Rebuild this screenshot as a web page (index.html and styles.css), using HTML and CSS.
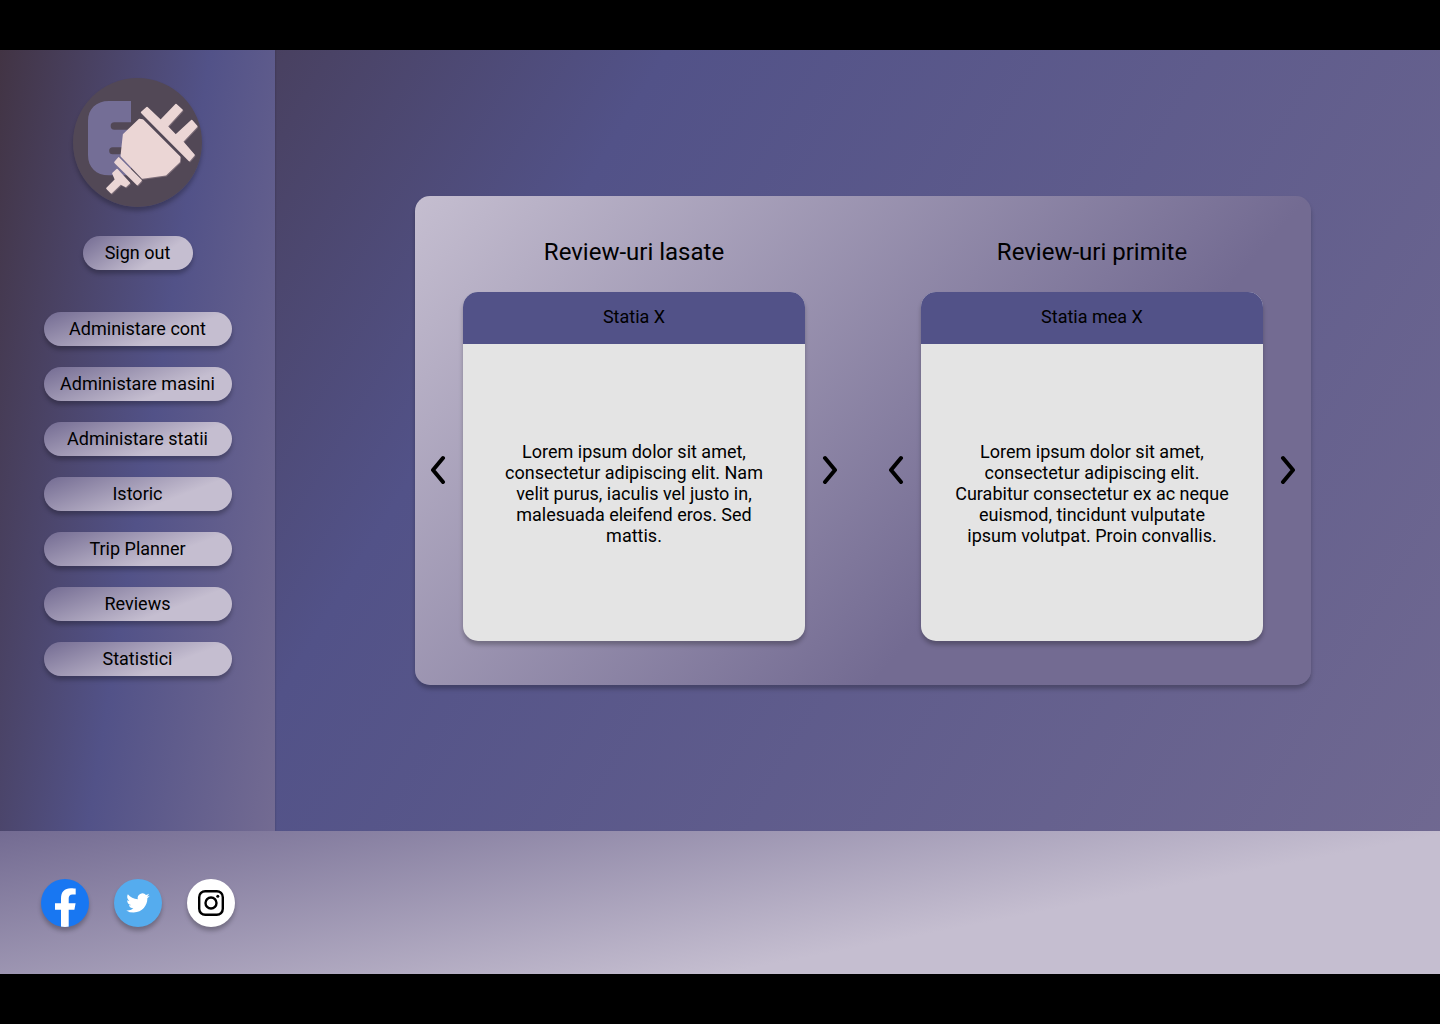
FILE: index.html
```html
<!DOCTYPE html>
<html lang="ro">
<head>
  <meta charset="utf-8">
  <meta name="viewport" content="width=device-width, initial-scale=1">
  <title>Reviews</title>
  <link rel="stylesheet" href="styles.css">
</head>
<body>
  <div class="page">
    <div class="content">
      <aside class="sidebar">
        <a class="logo" href="#" aria-label="Home">
          <svg viewBox="39 39 387 387" aria-hidden="true">
            <circle cx="232.500" cy="232.500" r="193.500" fill="#524856"/>
            <path fill="#746e96" d="M213 108H147C108 108 84 132 84 168V270C84 307 108 331 147 331H213V268H158A10.500 10.500 0 0 1 158 247H213V194H163A11 11 0 0 1 163 172H213Z"/>
            <g class="plug-shade" transform="translate(2 3)">
              <path d="M238 164L248 165L359 276L358 290L317 329L247 339L184 273L191 209Z"/>
              <path d="M245 142L261 128L302 167L348 119L366 135L321 184L347 211L395 167L410 184L367 230L402 270L388 286Z"/>
              <path d="M176 279L243 346L232 358L165 292Z"/>
              <path d="M171 314L208 354L197 364L182 356L154 383L141 370L167 344L159 325Z"/>
            </g>
            <g class="plug">
              <path d="M238 164L248 165L359 276L358 290L317 329L247 339L184 273L191 209Z"/>
              <path d="M245 142L261 128L302 167L348 119L366 135L321 184L347 211L395 167L410 184L367 230L402 270L388 286Z"/>
              <path d="M176 279L243 346L232 358L165 292Z"/>
              <path d="M171 314L208 354L197 364L182 356L154 383L141 370L167 344L159 325Z"/>
            </g>
          </svg>
        </a>
        <button class="pill pill-small" type="button">Sign out</button>
        <nav class="menu">
          <button class="pill" type="button">Administare cont</button>
          <button class="pill" type="button">Administare masini</button>
          <button class="pill" type="button">Administare statii</button>
          <button class="pill" type="button">Istoric</button>
          <button class="pill" type="button">Trip Planner</button>
          <button class="pill" type="button">Reviews</button>
          <button class="pill" type="button">Statistici</button>
        </nav>
      </aside>
      <main class="main">
        <div class="panel">
          <section class="reviews">
            <h2 class="title">Review-uri lasate</h2>
            <div class="carousel">
              <button class="arrow" type="button" aria-label="Previous">
                <svg width="16" height="30" viewBox="0 0 16 30"><path d="M12 3L2 15L12 27"/></svg>
              </button>
              <article class="card">
                <h3 class="card-head">Statia X</h3>
                <p class="card-body">Lorem ipsum dolor sit amet, consectetur adipiscing elit. Nam velit purus, iaculis vel justo in, malesuada eleifend eros. Sed mattis.</p>
              </article>
              <button class="arrow" type="button" aria-label="Next">
                <svg width="16" height="30" viewBox="0 0 16 30"><path d="M4 3L14 15L4 27"/></svg>
              </button>
            </div>
          </section>
          <section class="reviews">
            <h2 class="title">Review-uri primite</h2>
            <div class="carousel">
              <button class="arrow" type="button" aria-label="Previous">
                <svg width="16" height="30" viewBox="0 0 16 30"><path d="M12 3L2 15L12 27"/></svg>
              </button>
              <article class="card">
                <h3 class="card-head">Statia mea X</h3>
                <p class="card-body">Lorem ipsum dolor sit amet, consectetur adipiscing elit. Curabitur consectetur ex ac neque euismod, tincidunt vulputate ipsum volutpat. Proin convallis.</p>
              </article>
              <button class="arrow" type="button" aria-label="Next">
                <svg width="16" height="30" viewBox="0 0 16 30"><path d="M4 3L14 15L4 27"/></svg>
              </button>
            </div>
          </section>
        </div>
      </main>
    </div>
    <footer class="footer">
      <a class="social facebook" href="#" aria-label="Facebook">
        <svg viewBox="0 0 48 48"><path fill="#fff" d="M20 48V30.700H14V24.300H20V19.500C20 12.800 23.500 9.200 29.700 9.200C32 9.200 34.700 9.600 34.700 9.600V15.500H31.500C28.600 15.500 27.700 17.300 27.700 19.500V24.300H34.600L33.400 30.700H27.700V48Z"/></svg>
      </a>
      <a class="social twitter" href="#" aria-label="Twitter">
        <svg viewBox="-12.500 -12.500 49 49"><path fill="#fff" d="M23.950 4.570a10 10 0 0 1-2.820.770 4.960 4.960 0 0 0 2.160-2.720c-.950.550-2 .960-3.130 1.180a4.920 4.920 0 0 0-8.380 4.480C7.690 8.090 4.070 6.130 1.640 3.160a4.820 4.820 0 0 0-.670 2.470c0 1.710.870 3.220 2.190 4.100a4.900 4.900 0 0 1-2.230-.610v.060a4.920 4.920 0 0 0 3.950 4.820 5 5 0 0 1-2.210.090 4.940 4.940 0 0 0 4.600 3.420A9.870 9.870 0 0 1 0 19.540a13.990 13.990 0 0 0 7.550 2.210c9.050 0 14-7.500 14-13.980 0-.210 0-.420-.020-.630a9.940 9.940 0 0 0 2.460-2.550z"/></svg>
      </a>
      <a class="social instagram" href="#" aria-label="Instagram">
        <svg viewBox="0 0 48 48" fill="none" stroke="#000" stroke-width="2.400"><rect x="12.200" y="12.200" width="23.600" height="23.600" rx="6"/><circle cx="24" cy="24" r="5.500"/><circle cx="30.800" cy="17.200" r="1.500" fill="#000" stroke="none"/></svg>
      </a>
    </footer>
  </div>
</body>
</html>
```
FILE: styles.css
```css
* {
  box-sizing: border-box;
}

body {
  margin: 0;
  background: #000;
  color: #000;
  font-family: Roboto, "Liberation Sans", sans-serif;
  font-size: 18px;
  line-height: 21px;
}

.page {
  display: flex;
  flex-direction: column;
  min-height: 100vh;
  padding: 50px 0;
}

.content {
  display: flex;
  flex: 1;
  background: linear-gradient(121deg, #423444 0%, #525288 35%, #736b92 108%);
}

.sidebar {
  display: flex;
  flex-direction: column;
  align-items: center;
  flex: none;
  width: 275px;
  padding: 28px 43px;
  background: linear-gradient(99deg, #423444 0%, #525288 53%, #736b92 100%);
  box-shadow: 0 0 2px rgba(0, 0, 0, 0.25);
}

.logo {
  width: 129px;
  height: 129px;
  margin-bottom: 29px;
  border-radius: 50%;
  box-shadow: 0 4px 4px rgba(0, 0, 0, 0.25);
}

.logo svg,
.social svg {
  display: block;
  width: 100%;
  height: 100%;
}

.plug,
.plug-shade {
  fill: #ebd6d5;
  stroke: #ebd6d5;
  stroke-width: 5;
  stroke-linejoin: round;
}

.plug-shade {
  fill: #a38f98;
  stroke: #a38f98;
  opacity: 0.5;
}

.pill {
  width: 100%;
  height: 34px;
  padding: 0 0 2px;
  border: 0;
  border-radius: 17px;
  background: linear-gradient(159deg, #736b92 0%, #c5bed0 67%);
  box-shadow: 0 4px 4px rgba(0, 0, 0, 0.25);
  color: inherit;
  font: inherit;
  cursor: pointer;
}

.pill-small {
  width: 110px;
  background: linear-gradient(146deg, #736b92 0%, #c5bed0 67%);
}

.menu {
  display: flex;
  flex-direction: column;
  gap: 21px;
  width: 188px;
  margin-top: 42px;
}

.main {
  display: flex;
  align-items: center;
  flex: 1;
  padding: 40px 129px 40px 140px;
}

.panel {
  display: grid;
  grid-template-columns: 1fr 1fr;
  gap: 20px;
  flex: 1;
  padding: 42px 0 44px;
  border-radius: 15px;
  background: linear-gradient(132deg, #c5bed0 0%, #736b92 67%);
  box-shadow: 0 4px 4px rgba(0, 0, 0, 0.25);
}

.title {
  margin: 0 0 26px;
  font-size: 24px;
  font-weight: 400;
  line-height: 28px;
  text-align: center;
}

.carousel {
  display: grid;
  grid-template-columns: 48px 1fr 48px;
}

.arrow {
  display: flex;
  align-items: center;
  justify-content: center;
  padding: 6px 0 0;
  border: 0;
  background: none;
  cursor: pointer;
}

.arrow svg {
  fill: none;
  stroke: #000;
  stroke-width: 4;
  stroke-linecap: round;
  stroke-linejoin: round;
}

.card {
  display: flex;
  flex-direction: column;
  min-height: 349px;
  border-radius: 15px;
  overflow: hidden;
  background: #e4e4e4;
  box-shadow: 0 4px 4px rgba(0, 0, 0, 0.25);
}

.card-head {
  margin: 0;
  padding: 14px 16px 16px;
  background: #525288;
  font-size: 18px;
  font-weight: 400;
  line-height: 22px;
  text-align: center;
}

.card-body {
  display: flex;
  align-items: center;
  flex: 1;
  margin: 0;
  padding: 2px 33px 0;
  text-align: center;
}

.footer {
  display: flex;
  gap: 25px;
  padding: 48px 41px 47px;
  background: linear-gradient(169deg, #736b92 0%, #c5bed0 67%);
}

.social {
  width: 48px;
  height: 48px;
  border-radius: 50%;
  overflow: hidden;
  box-shadow: 0 4px 4px rgba(0, 0, 0, 0.25);
}

.facebook {
  background: #1877f2;
}

.twitter {
  background: #55acee;
}

.instagram {
  background: #fff;
}
```
